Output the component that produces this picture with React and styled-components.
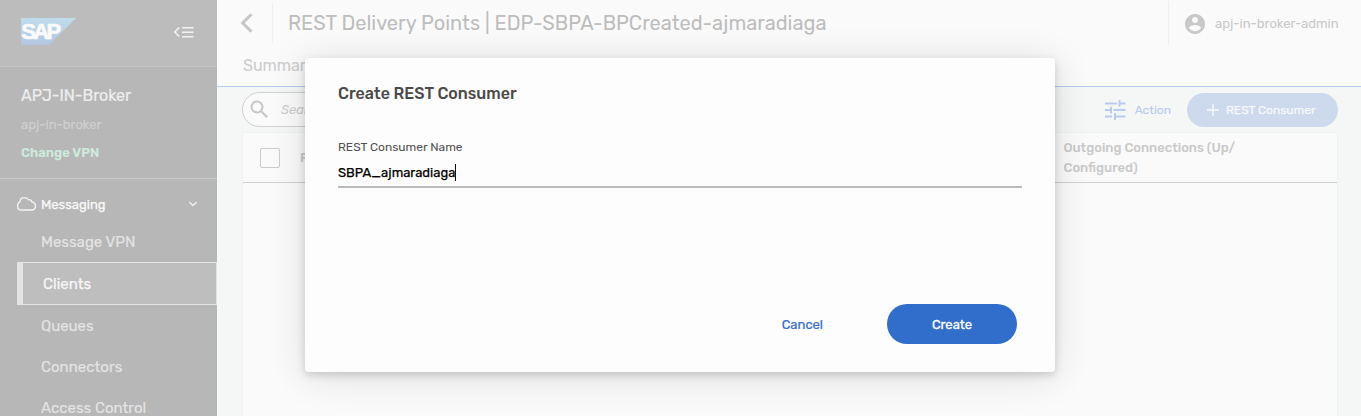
import React from "react";
import styled, { createGlobalStyle } from "styled-components";

const GlobalStyle = createGlobalStyle`
  * { box-sizing: border-box; }
  body { margin: 0; overflow: hidden; font-family: Rubik, Roboto, sans-serif; }
  button, input { font-family: inherit; }
`;

const Page = styled.div`
  position: relative;
  display: flex;
  width: 1361px;
  height: 416px;
  overflow: hidden;
  background: #fafafa;
`;

/* ---- sidebar ---- */
const Sidebar = styled.aside`
  display: flex;
  flex-direction: column;
  flex: 0 0 217px;
  background: #b7b7b7;
  overflow: hidden;
`;
const Brand = styled.div`
  display: flex;
  justify-content: space-between;
  align-items: flex-start;
  flex: 0 0 67px;
  padding: 18px 23px 0 21px;
  background: #bcbcbc;
  border-bottom: 1px solid #c6c6c6;
`;
const CollapseIcon = styled.svg`
  margin-top: 8px;
`;
const BrokerInfo = styled.div`
  flex: 0 0 112px;
  padding: 19px 21px 0;
  border-bottom: 1px solid #cacaca;
`;
const BrokerName = styled.div`
  font-size: 16px;
  line-height: 20px;
  color: #eee;
  -webkit-text-stroke: 0.2px;
`;
const BrokerVpn = styled.div`
  margin-top: 11px;
  font-size: 13px;
  line-height: 16px;
  color: #cfcfcf;
  -webkit-text-stroke: 0.2px;
`;
const ChangeLink = styled.a`
  display: block;
  margin-top: 12px;
  font-size: 13px;
  font-weight: 600;
  line-height: 16px;
  color: #cdeadd;
`;
const NavGroup = styled.div`
  display: flex;
  align-items: center;
  flex: 0 0 42px;
  margin-top: 4px;
  padding: 0 19px 0 17px;
  gap: 5px;
  font-size: 13px;
  color: #fafafa;
  -webkit-text-stroke: 0.25px;
`;
const GroupLabel = styled.span`
  flex: 1;
`;
const NavList = styled.nav`
  display: flex;
  flex-direction: column;
  margin-top: -4px;
`;
const NavItem = styled.div`
  display: flex;
  align-items: center;
  flex: 0 0 ${(p) => (p.$active ? 43 : 41)}px;
  margin-left: 17px;
  padding-left: ${(p) => (p.$active ? 20 : 24)}px;
  font-size: 15px;
  color: ${(p) => (p.$active ? "#f6f6f6" : "#e4e4e4")};
  -webkit-text-stroke: ${(p) => (p.$active ? 0.25 : 0.15)}px;
  ${(p) => p.$active && `
    padding-top: 1px;
    background: #bebebe;
    border: 1px solid #e4e4e4;
    border-left-width: 6px;
  `}
`;

/* ---- main area ---- */
const Main = styled.main`
  display: flex;
  flex-direction: column;
  flex: 1;
  min-width: 0;
  background: #f5f7f7;
`;
const Header = styled.header`
  display: flex;
  flex-direction: column;
  flex: 0 0 87px;
  background: #fafafa;
  border-bottom: 1px solid #b8caee;
`;
const TitleRow = styled.div`
  display: flex;
  align-items: flex-start;
  height: 46px;
`;
const BackIcon = styled.svg`
  margin: 13px 0 0 23px;
`;
const Divider = styled.div`
  width: 1px;
  height: ${(p) => p.$height}px;
  margin-top: ${(p) => p.$top}px;
  margin-left: ${(p) => p.$left}px;
  background: #efefef;
`;
const Title = styled.h1`
  flex: 1;
  margin: 10px 0 0 15px;
  font-size: 20px;
  font-weight: 400;
  line-height: 26px;
  color: #bdbdbd;
  white-space: nowrap;
`;
const User = styled.div`
  display: flex;
  align-items: center;
  width: 192px;
  height: 46px;
  padding: 1px 0 0 16px;
  gap: 10px;
  font-size: 13px;
  color: #c8c8c8;
`;
const Tab = styled.div`
  padding: 10px 0 0 26px;
  font-size: 16px;
  line-height: 20px;
  color: #ccc;
`;
const Toolbar = styled.div`
  display: flex;
  align-items: center;
  justify-content: space-between;
  flex: 0 0 45px;
  padding: 0 23px 0 25px;
`;
const Search = styled.div`
  display: flex;
  align-items: center;
  width: 300px;
  height: 35px;
  padding-left: 7px;
  gap: 12px;
  border: 1px solid #d0d0d0;
  border-radius: 18px;
  background: #fafafa;
  font-size: 13px;
  font-style: italic;
  color: #ccc;
`;
const Actions = styled.div`
  display: flex;
  align-items: center;
`;
const ActionButton = styled.div`
  display: flex;
  align-items: center;
  gap: 9px;
  margin-right: 16px;
  font-size: 12px;
  color: #b9cbec;
  -webkit-text-stroke: 0.15px;
`;
const AddButton = styled.div`
  display: flex;
  align-items: center;
  width: 151px;
  height: 34px;
  padding-left: 20px;
  gap: 7px;
  border-radius: 17px;
  background: #cddaed;
  color: #f8f9fb;
  font-size: 12px;
  -webkit-text-stroke: 0.25px;
`;
const Table = styled.section`
  flex: 1;
  margin: 0 23px 0 25px;
  background: #fafafa;
  border: 1px solid #eff2f1;
  border-bottom: 0;
`;
const TableHead = styled.div`
  display: flex;
  align-items: flex-start;
  height: 50px;
  border-bottom: 1px solid #cfcfcf;
  color: #c9c9c9;
  font-size: 13px;
  font-weight: 500;
  line-height: 20px;
`;
const Checkbox = styled.div`
  width: 20px;
  height: 20px;
  margin: 15px 20px 0 17px;
  border: 1px solid #cbcbcb;
  border-radius: 2px;
`;
const NameColumn = styled.div`
  flex: 1;
  padding-top: 15px;
`;
const ConnectionsColumn = styled.div`
  width: 273.5px;
  padding-top: 5px;
  padding-right: 70px;
`;

/* ---- dialog ---- */
const Dialog = styled.div`
  position: absolute;
  left: 305px;
  top: 58px;
  display: flex;
  flex-direction: column;
  width: 750px;
  height: 314px;
  padding: 25px 33px 28px;
  border-radius: 4px;
  background: #fdfdfd;
  box-shadow: 0 3px 8px rgba(0, 0, 0, 0.16), 0 4px 38px rgba(0, 0, 0, 0.12);
`;
const DialogTitle = styled.h2`
  margin: 0;
  font-size: 16px;
  font-weight: 500;
  line-height: 22px;
  color: #4a4a4a;
`;
const Label = styled.label`
  margin-top: 33px;
  font-size: 12px;
  line-height: 18px;
  color: #505050;
`;
const Field = styled.div`
  display: flex;
  align-items: center;
  height: 32px;
  padding-top: 2px;
  border-bottom: 2px solid #bbb;
  font-size: 13px;
  color: #000;
  -webkit-text-stroke: 0.25px;
`;
const Caret = styled.span`
  width: 1px;
  height: 17px;
  background: #111;
`;
const DialogFooter = styled.div`
  display: flex;
  align-items: center;
  justify-content: flex-end;
  margin-top: auto;
  padding-right: 5px;
  gap: 64px;
`;
const CancelButton = styled.button`
  padding: 0;
  border: 0;
  background: none;
  color: #316dcb;
  font-size: 13px;
  -webkit-text-stroke: 0.2px;
`;
const CreateButton = styled.button`
  width: 130px;
  height: 40px;
  padding: 0;
  border: 0;
  border-radius: 20px;
  background: #316dcb;
  color: #fff;
  font-size: 13px;
  -webkit-text-stroke: 0.3px;
`;

const SapLogo = () => (
  <svg width="55" height="27" viewBox="0 0 55 27">
    <defs>
      <linearGradient id="sap" x1="0" y1="0" x2="0" y2="1">
        <stop offset="0" stopColor="#bfdcec" />
        <stop offset="1" stopColor="#b4c6e1" />
      </linearGradient>
    </defs>
    <path d="M0 0H55L28 27H0Z" fill="url(#sap)" />
    <text x="0.3" y="21.4" textLength="40" lengthAdjust="spacing" fontFamily="Liberation Sans, sans-serif" fontWeight="700" fontSize="22" fill="#fafafa" stroke="#fafafa" strokeWidth="0.7">SAP</text>
  </svg>
);

export default function App() {
  return (
    <>
      <GlobalStyle />
      <Page>
        <Sidebar>
          <Brand>
            <SapLogo />
            <CollapseIcon width="20" height="13" viewBox="0 0 20 13" fill="none" stroke="#f3f3f3">
              <path d="M5.2 1.5L0.8 6L5.2 10.5" strokeWidth="1.6" />
              <path d="M8 1.8H19.5M8 6.3H19.5M8 10.8H19.5" strokeWidth="1.5" />
            </CollapseIcon>
          </Brand>
          <BrokerInfo>
            <BrokerName>APJ-IN-Broker</BrokerName>
            <BrokerVpn>apj-in-broker</BrokerVpn>
            <ChangeLink>Change VPN</ChangeLink>
          </BrokerInfo>
          <NavGroup>
            <svg width="19" height="14" viewBox="0 0 19 14" fill="none" stroke="#f5f5f5" strokeWidth="1.3">
              <path d="M4.5 13H14.6C17 13 18.4 11.5 18.4 9.3C18.4 7 17 5.2 15 5C14.6 3.4 13 2.5 11.4 2.8C10.6 1.4 9 .7 7.2 .7C4.8 .7 3 2.4 2.9 4.9C1.4 5.6.6 7.2.6 9C.6 11.3 2.2 13 4.5 13Z" />
            </svg>
            <GroupLabel>Messaging</GroupLabel>
            <svg width="10" height="6" viewBox="0 0 10 6" fill="none" stroke="#efefef" strokeWidth="1.4">
              <path d="M1.3 1L5 4.6L8.7 1" />
            </svg>
          </NavGroup>
          <NavList>
            <NavItem>Message VPN</NavItem>
            <NavItem $active>Clients</NavItem>
            <NavItem>Queues</NavItem>
            <NavItem>Connectors</NavItem>
            <NavItem>Access Control</NavItem>
          </NavList>
        </Sidebar>
        <Main>
          <Header>
            <TitleRow>
              <BackIcon width="13" height="20" viewBox="0 0 13 20" fill="none" stroke="#c6c6c6" strokeWidth="3">
                <path d="M11.5 1.2L2.7 10L11.5 18.8" />
              </BackIcon>
              <Divider $height={40} $top={3} $left={19} />
              <Title>REST Delivery Points | EDP-SBPA-BPCreated-ajmaradiaga</Title>
              <Divider $height={44} $top={1} $left={0} />
              <User>
                <svg width="20" height="20" viewBox="2 2 20 20" fill="#c8c8c8">
                  <path d="M12 2C6.48 2 2 6.48 2 12s4.48 10 10 10 10-4.48 10-10S17.52 2 12 2zm0 3c1.66 0 3 1.34 3 3s-1.34 3-3 3-3-1.34-3-3 1.34-3 3-3zm0 14.2c-2.5 0-4.71-1.28-6-3.22.03-1.99 4-3.08 6-3.08 1.99 0 5.97 1.09 6 3.08-1.29 1.94-3.5 3.22-6 3.22z" />
                </svg>
                apj-in-broker-admin
              </User>
            </TitleRow>
            <Tab>Summary</Tab>
          </Header>
          <Toolbar>
            <Search>
              <svg width="19" height="19" viewBox="0 0 19 19" fill="none" stroke="#c6c6c6">
                <circle cx="7" cy="7" r="5.5" strokeWidth="2" />
                <path d="M11 11L17.2 17.2" strokeWidth="2.2" />
              </svg>
              Search
            </Search>
            <Actions>
              <ActionButton>
                <svg width="21" height="20" viewBox="0 0 21 20" fill="none" stroke="#b9cbec" strokeWidth="2">
                  <path d="M0 3.4H12M14.5 3.4H20.5M14.5 0V6.8M0 10H6M8.5 10H20.5M6 6.8V13.4M0 16.6H7M10 16.6H20.5M10 13V20" />
                </svg>
                Action
              </ActionButton>
              <AddButton>
                <svg width="12" height="12" viewBox="0 0 12 12" stroke="#f8f9fb" strokeWidth="1.4">
                  <path d="M6 0V12M0 6H12" />
                </svg>
                REST Consumer
              </AddButton>
            </Actions>
          </Toolbar>
          <Table>
            <TableHead>
              <Checkbox />
              <NameColumn>REST</NameColumn>
              <ConnectionsColumn>Outgoing Connections (Up/<br />Configured)</ConnectionsColumn>
            </TableHead>
          </Table>
        </Main>
        <Dialog role="dialog">
          <DialogTitle>Create REST Consumer</DialogTitle>
          <Label>REST Consumer Name</Label>
          <Field>SBPA_ajmaradiaga<Caret /></Field>
          <DialogFooter>
            <CancelButton>Cancel</CancelButton>
            <CreateButton>Create</CreateButton>
          </DialogFooter>
        </Dialog>
      </Page>
    </>
  );
}
